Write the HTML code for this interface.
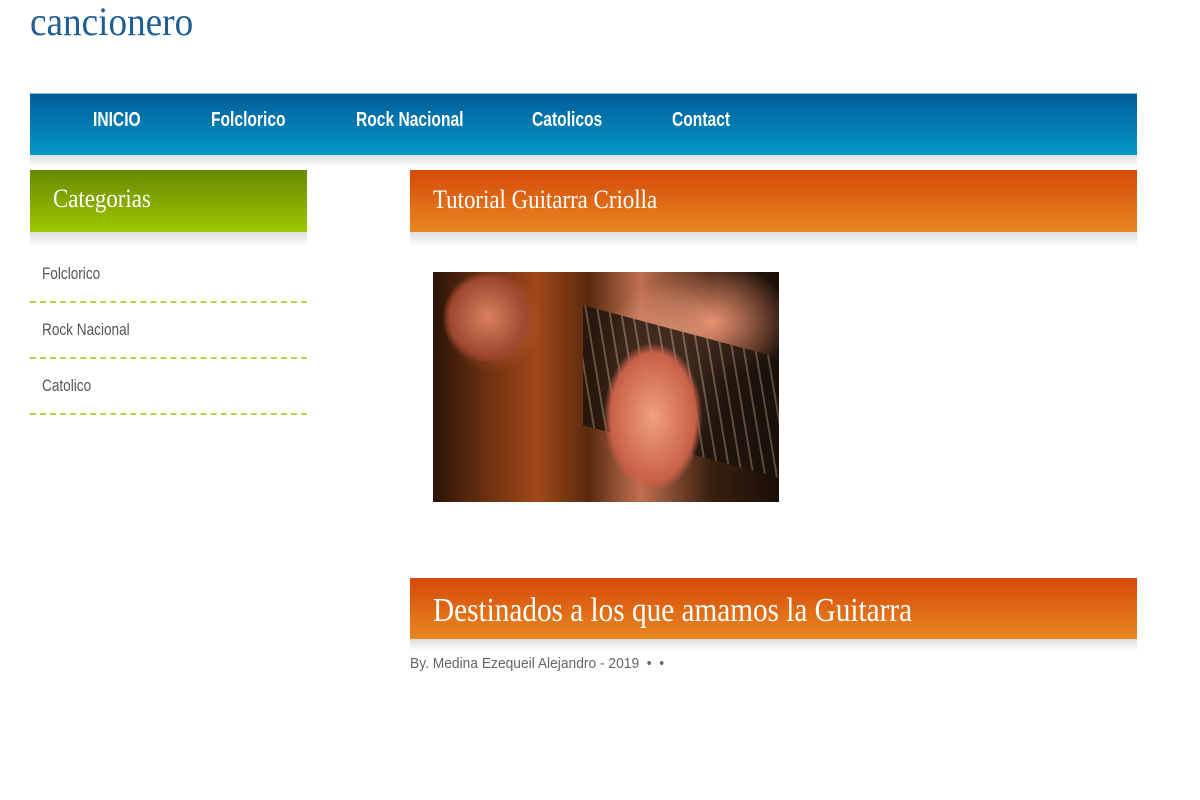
<!DOCTYPE html>
<html><head><meta charset="utf-8"><style>
body{margin:0;width:1200px;height:800px;background:#fff;position:relative;overflow:hidden;font-family:"Liberation Sans Narrow","Liberation Sans",sans-serif}
.a{position:absolute}
.logo{left:30px;top:0;font-family:"Liberation Serif",serif;font-size:40px;color:#1f5e95;line-height:44px;transform:scaleX(.93);transform-origin:left}
.nav{left:30px;top:93px;width:1107px;height:61px;background:linear-gradient(#025d9a,#0398c6);border-top:1px solid #8fb5d0}
.nav span{position:absolute;top:15px;color:#fff;font-weight:bold;font-size:20px;transform:scaleX(.78);transform-origin:left}
.sh{height:14px;background:linear-gradient(#ddd,#fff)}
.hd{font-family:"Liberation Serif",serif;color:#fff}
.item{position:absolute;left:30px;width:277px;height:55px;border-bottom:2px dashed #b7d34a}
.item span{position:absolute;left:12px;top:18px;color:#555;font-size:17px;transform:scaleX(.8);transform-origin:left}
</style></head><body>
<div class="a logo">cancionero</div>
<div class="a nav">
<span style="left:63px">INICIO</span>
<span style="left:181px">Folclorico</span>
<span style="left:326px">Rock Nacional</span>
<span style="left:502px">Catolicos</span>
<span style="left:642px">Contact</span>
</div>
<div class="a sh" style="left:30px;top:155px;width:1107px;height:12px"></div>
<div class="a" style="left:30px;top:170px;width:277px;height:62px;background:linear-gradient(#678a00,#9fc600)"><div class="a hd" style="left:23px;top:14px;font-size:26px;transform:scaleX(.88);transform-origin:left">Categorias</div></div>
<div class="a sh" style="left:30px;top:232px;width:277px"></div>
<div class="item" style="top:246px"><span>Folclorico</span></div>
<div class="item" style="top:302px"><span>Rock Nacional</span></div>
<div class="item" style="top:358px"><span>Catolico</span></div>
<div class="a" style="left:410px;top:170px;width:727px;height:62px;background:linear-gradient(#d5490b,#e8881f)"><div class="a hd" style="left:23px;top:15px;font-size:26px;transform:scaleX(.88);transform-origin:left">Tutorial Guitarra Criolla</div></div>
<div class="a sh" style="left:410px;top:232px;width:727px"></div>
<div class="a" style="left:433px;top:272px;width:346px;height:230px;background:
radial-gradient(ellipse 60px 40px at 640px 120px,#f0a880,transparent),
radial-gradient(ellipse 70px 90px at 230px 100px,#e8a080,transparent),
radial-gradient(ellipse 50px 50px at 60px 50px,#c86040,transparent),
radial-gradient(ellipse 80px 60px at 280px 50px,#e89070,transparent),
linear-gradient(90deg,#2a1408 0%,#6a3010 15%,#a04818 30%,#5a2a10 45%,#c07050 60%,#3a2010 80%,#1a0f08 100%);overflow:hidden">
<div class="a" style="left:150px;top:60px;width:200px;height:120px;background:repeating-linear-gradient(80deg,#1a120c 0 10px,#6a5a4a 10px 12px);transform:skewY(15deg);opacity:.8"></div>
<div class="a" style="left:170px;top:70px;width:100px;height:150px;background:radial-gradient(ellipse at 50% 50%,#f0a080,#c86048 60%,transparent 70%)"></div>
<div class="a" style="left:10px;top:0;width:90px;height:90px;background:radial-gradient(ellipse,#d88060,#a04830 60%,transparent 72%)"></div>
</div>
<div class="a" style="left:410px;top:578px;width:727px;height:61px;background:linear-gradient(#d5490b,#e8881f)"><div class="a hd" style="left:23px;top:14px;font-size:34px;transform:scaleX(.86);transform-origin:left;white-space:nowrap">Destinados a los que amamos la Guitarra</div></div>
<div class="a sh" style="left:410px;top:639px;width:727px;height:12px"></div>
<div class="a" style="left:410px;top:655px;font-size:15px;color:#666;transform:scaleX(.92);transform-origin:left;white-space:nowrap">By. Medina Ezequeil Alejandro - 2019 &nbsp;•&nbsp; •</div>
</body></html>
